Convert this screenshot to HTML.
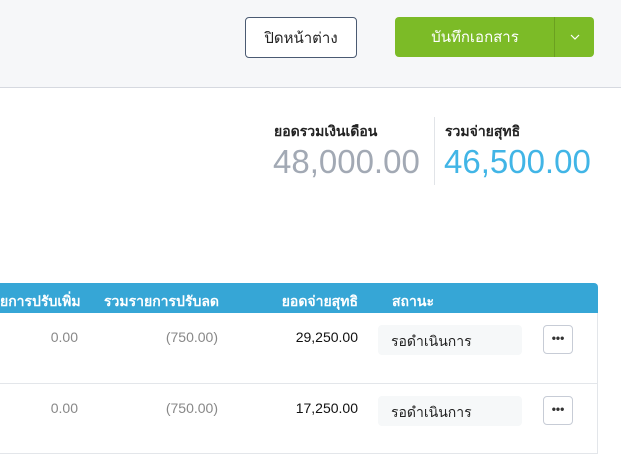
<html><head><style>
html,body{margin:0;width:621px;height:467px;overflow:hidden}
body{background:#f6f7f9;font-family:"Liberation Sans","Noto Sans CJK SC",sans-serif;position:relative}
.a{position:absolute;white-space:nowrap}
.btn{position:absolute;box-sizing:border-box;border-radius:4px;font-size:15px;display:flex;align-items:center;justify-content:center}
.card{left:-10px;top:87px;width:640px;height:400px;background:#fff;border:1px solid #d6d9e0;border-bottom:none;border-radius:0 10px 0 0;box-sizing:border-box}
.lbl{font-size:14px;color:#222;font-weight:bold}
.num{font-size:33px;letter-spacing:0px}
.th{color:#fff;font-size:14px;font-weight:bold;top:291px}
.td{font-size:14px;text-align:right}
.st{position:absolute;left:378px;width:144px;height:30px;background:#f6f8f9;border-radius:4px;font-size:14px;color:#222;line-height:32px;padding-left:13px;box-sizing:border-box}
.dots{position:absolute;left:543px;width:30px;height:29px;border:1px solid #c7ccd6;border-radius:4px;box-sizing:border-box;text-align:center;font-size:12px;font-weight:bold;line-height:24px;color:#333;background:#fff}
</style></head><body>
<div class="btn" style="left:245px;top:17px;width:112px;height:41px;border:1px solid #4a5a72;background:#fff;color:#222">ปิดหน้าต่าง</div>
<div class="btn" style="left:395px;top:17px;width:160px;height:40px;background:#7cbb27;color:#fff;border-radius:4px 0 0 4px">บันทึกเอกสาร</div>
<div class="btn" style="left:554px;top:17px;width:40px;height:40px;background:#7cbb27;color:#fff;border-left:1px solid #6ba020;border-radius:0 4px 4px 0"><svg width="10" height="6" viewBox="0 0 10 6"><path d="M1 1l4 4 4-4" stroke="#fff" stroke-width="1.2" fill="none"/></svg></div>
<div class="a card"></div>
<div class="a lbl" style="left:274px;top:121px">ยอดรวมเงินเดือน</div>
<div class="a num" style="left:273px;top:143px;color:#a2a9b4">48,000.00</div>
<div class="a" style="left:434px;top:117px;width:1px;height:68px;background:#e1e4e8"></div>
<div class="a lbl" style="left:445px;top:121px">รวมจ่ายสุทธิ</div>
<div class="a num" style="left:444px;top:143px;color:#41b5e6">46,500.00</div>
<div class="a" style="left:0;top:283px;width:598px;height:30px;background:#36a6d6;border-radius:0 4px 0 0"></div>
<div class="a th" style="left:0">ยการปรับเพิ่ม</div>
<div class="a th" style="left:104px">รวมรายการปรับลด</div>
<div class="a th" style="left:258px;width:100px;text-align:right">ยอดจ่ายสุทธิ</div>
<div class="a th" style="left:392px">สถานะ</div>
<div class="a" style="left:0;top:313px;width:598px;height:141px;border-right:1px solid #e3e6ea;border-bottom:1px solid #e3e6ea;box-sizing:border-box"></div>
<div class="a" style="left:0;top:383px;width:598px;height:1px;background:#e3e6ea"></div>
<div class="a td" style="left:0;top:329px;width:78px;color:#888">0.00</div>
<div class="a td" style="left:100px;top:329px;width:118px;color:#888">(750.00)</div>
<div class="a td" style="left:250px;top:329px;width:108px;color:#111">29,250.00</div>
<div class="st" style="top:325px">รอดำเนินการ</div>
<div class="dots" style="top:325px">•••</div>
<div class="a td" style="left:0;top:400px;width:78px;color:#888">0.00</div>
<div class="a td" style="left:100px;top:400px;width:118px;color:#888">(750.00)</div>
<div class="a td" style="left:250px;top:400px;width:108px;color:#111">17,250.00</div>
<div class="st" style="top:396px">รอดำเนินการ</div>
<div class="dots" style="top:396px">•••</div>
</body></html>
